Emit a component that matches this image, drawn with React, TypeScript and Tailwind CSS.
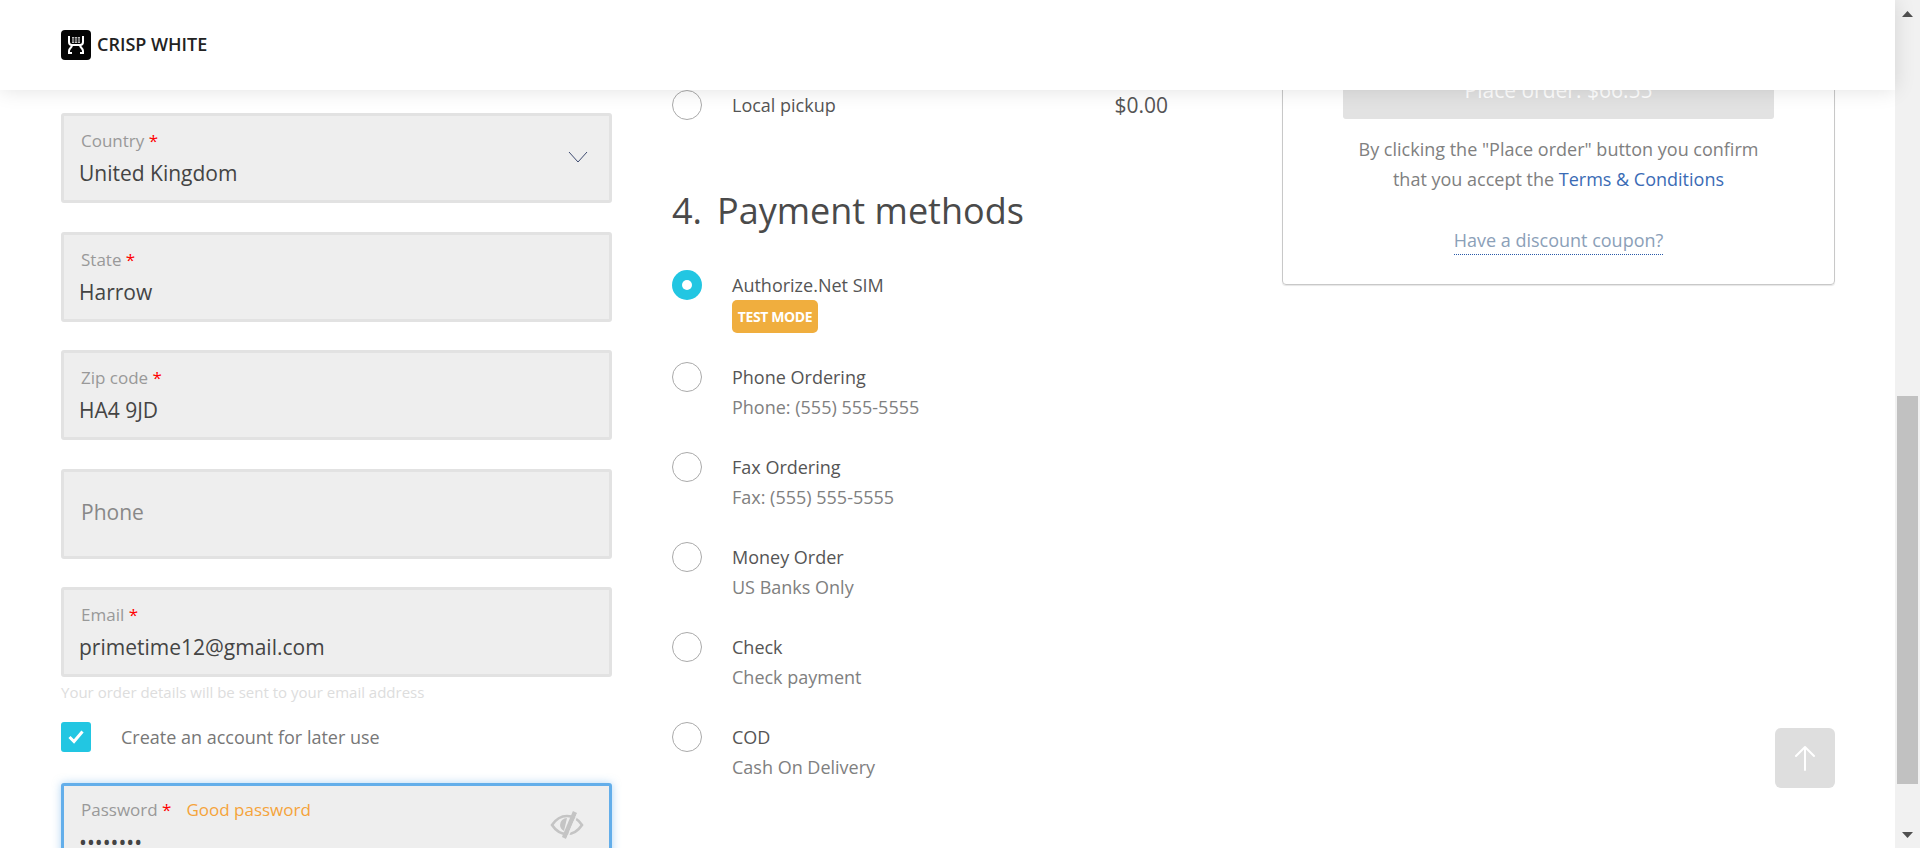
const font = "font-['Open_Sans',sans-serif]";

function Field({ label, value, children }: { label: string; value: string; children?: React.ReactNode }) {
  return (
    <div className="relative h-[90px] shrink-0 rounded-[3px] border-[3px] border-[#e2e2e2] bg-[#eeeeee]">
      <div className="pl-[17px] pt-[13px] text-[17px] leading-[24px] text-[#999999]">
        {label} <span className="text-[#ff0000]">*</span>
      </div>
      <div className="pl-[15px] pt-[5px] text-[21px] leading-[30px] text-[#444444]">{value}</div>
      {children}
    </div>
  );
}

function Radio({ checked }: { checked?: boolean }) {
  if (checked) {
    return (
      <div className="flex h-[30px] w-[30px] shrink-0 items-center justify-center rounded-full bg-[#22c6e2]">
        <div className="h-[10px] w-[10px] rounded-full bg-white" />
      </div>
    );
  }
  return <div className="h-[30px] w-[30px] shrink-0 rounded-full border border-[#aaaaaa] bg-white" />;
}

function PayRow({ title, sub }: { title: string; sub: string }) {
  return (
    <div className="mb-[30px] flex gap-[30px]">
      <Radio />
      <div className="text-[18px] leading-[30px]">
        <div className="text-[#555555]">{title}</div>
        <div className="text-[#808080]">{sub}</div>
      </div>
    </div>
  );
}

function Logo() {
  return (
    <svg width="30" height="30" viewBox="0 0 30 30" className="shrink-0">
      <rect width="30" height="30" rx="4" fill="#050505" />
      <path d="M11 7h8v6h-8z" fill="#bdbdbd" />
      <path d="M11 9h8M11 11h8M13.500 7v6M16.500 7v6" stroke="#050505" strokeWidth="0.7" />
      <g fill="none" stroke="#ffffff" strokeWidth="2">
        <path d="M8 6v6c0 2 1 3 3 3h8c2 0 3-1 3-3V6" />
        <path d="M11 15c0 3-3 3-3 6v2h3M19 15c0 3 3 3 3 6v2h-3" />
      </g>
    </svg>
  );
}

export default function App() {
  return (
    <div className={`${font} relative flex h-[848px] w-[1920px] overflow-hidden bg-white`}>
      <div className="absolute left-0 top-0 z-10 flex h-[90px] w-[1895px] items-center gap-[6px] bg-white pl-[61px] shadow-[0_0_20px_rgba(0,0,0,0.12)]">
        <Logo />
        <span className="mb-[2px] text-[18px] font-semibold text-[#222222]">CRISP WHITE</span>
      </div>

      <main className="flex w-[1895px] shrink-0 pl-[61px]">
        <section className="flex w-[551px] shrink-0 flex-col gap-[28.5px] pt-[113px]">
          <Field label="Country" value="United Kingdom">
            <svg width="20" height="12" viewBox="0 0 20 12" className="absolute left-[504px] top-[35px]">
              <path d="M1 1l9 10 9-10" fill="none" stroke="#3d4a70" strokeWidth="1" />
            </svg>
          </Field>
          <Field label="State" value="Harrow" />
          <Field label="Zip code" value="HA4 9JD" />
          <div className="flex h-[90px] shrink-0 items-center rounded-[3px] border-[3px] border-[#e2e2e2] bg-[#eeeeee] pb-[1px] pl-[17px] text-[21px] text-[#888888]">
            Phone
          </div>
          <div className="shrink-0">
            <Field label="Email" value="primetime12@gmail.com" />
            <div className="pt-[3px] text-[15px] leading-[24px] text-[#dddddd]">
              Your order details will be sent to your email address
            </div>
            <div className="mt-[18px] flex items-center gap-[30px]">
              <div className="flex h-[30px] w-[30px] items-center justify-center rounded-[3px] bg-[#22c6e2]">
                <svg width="16" height="14" viewBox="0 0 16 14">
                  <path d="M1.500 7l4.500 4.500 8.500-10" fill="none" stroke="#ffffff" strokeWidth="3" />
                </svg>
              </div>
              <span className="text-[18px] text-[#777777]">Create an account for later use</span>
            </div>
          </div>
          <div className="relative mt-[2px] h-[90px] shrink-0 rounded-[3px] border-[3px] border-[#63aeea] bg-[#eeeeee] shadow-[0_0_8px_rgba(99,174,234,0.5)]">
            <div className="flex gap-[15px] pl-[17px] pt-[12px] text-[17px] leading-[24px] text-[#999999]">
              <span>
                Password <span className="text-[#ff0000]">*</span>
              </span>
              <span className="text-[#f5a33a]">Good password</span>
            </div>
            <div className="pl-[15px] pt-[5px] text-[21px] leading-[30px] text-[#444444]">••••••••</div>
            <svg width="34" height="30" viewBox="0 0 34 30" className="absolute left-[486px] top-[24px]">
              <path d="M2 15c4-6 9-9 15-9s11 3 15 9c-4 6-9 9-15 9S6 21 2 15z" fill="none" stroke="#c4c4c4" strokeWidth="2.6" />
              <path d="M17 8a7 7 0 0 0-7 7c0 3 2 5 4 6z" fill="#c4c4c4" />
              <path d="M25 2L14 28" stroke="#c4c4c4" strokeWidth="4.5" />
              <path d="M27.500 4L16.500 30" stroke="#eeeeee" strokeWidth="1.5" />
            </svg>
          </div>
        </section>

        <section className="ml-[60px] w-[496px] shrink-0 pt-[90px]">
          <div className="flex gap-[30px]">
            <Radio />
            <div className="flex flex-1 items-center justify-between text-[18px] leading-[30px] text-[#555555]">
              <span>Local pickup</span>
              <span className="text-[21px]">$0.00</span>
            </div>
          </div>
          <h2 className="mt-[69px] flex gap-[15px] text-[36px] leading-[44px] text-[#4a4a4a]">
            <span>4.</span>
            <span>Payment methods</span>
          </h2>
          <div className="mb-[29px] mt-[37px] flex gap-[30px]">
            <Radio checked />
            <div>
              <div className="text-[18px] leading-[30px] text-[#555555]">Authorize.Net SIM</div>
              <div className="flex h-[33px] w-[86px] items-center justify-center rounded-[5px] bg-[#f0ae3e] text-[14px] font-bold tracking-[-0.4px] text-white">
                TEST MODE
              </div>
            </div>
          </div>
          <PayRow title="Phone Ordering" sub="Phone: (555) 555-5555" />
          <PayRow title="Fax Ordering" sub="Fax: (555) 555-5555" />
          <PayRow title="Money Order" sub="US Banks Only" />
          <PayRow title="Check" sub="Check payment" />
          <PayRow title="COD" sub="Cash On Delivery" />
        </section>

        <aside className="ml-[114px] w-[553px] shrink-0 pt-[30px]">
          <div className="flex h-[255px] flex-col items-center rounded-[4px] border border-[#c8c8c8] pt-[28px] shadow-[0_1px_1px_rgba(0,0,0,0.1)]">
            <div className="flex h-[60px] w-[431px] items-center justify-center rounded-[3px] bg-[#e2e2e2] pt-[3px] text-[21px] text-white">
              Place order: $66.55
            </div>
            <p className="mt-[15px] text-center text-[18px] leading-[30px] text-[#808080]">
              By clicking the "Place order" button you confirm
              <br />
              that you accept the <span className="text-[#3a6bb5]">Terms &amp; Conditions</span>
            </p>
            <span className="mt-[33px] border-b border-dotted border-[#2a5aa8] text-[18px] leading-[27px] text-[#8ba0b8]">
              Have a discount coupon?
            </span>
          </div>
        </aside>
      </main>

      <div className="flex w-[25px] shrink-0 flex-col items-center bg-[#f1f1f1]">
        <svg width="11" height="6" viewBox="0 0 11 6" className="mt-[11px]">
          <path d="M0 6h11L5.500 0z" fill="#505050" />
        </svg>
        <div className="mt-[379px] h-[388px] w-[21px] bg-[#c1c1c1]" />
        <svg width="11" height="6" viewBox="0 0 11 6" className="mt-[48px]">
          <path d="M0 0h11L5.500 6z" fill="#505050" />
        </svg>
      </div>

      <div className="absolute left-[1775px] top-[728px] flex h-[60px] w-[60px] items-center justify-center rounded-[6px] bg-[#dedede]">
        <svg width="22" height="28" viewBox="0 0 22 28">
          <path d="M11 26V3M2 12l9-9 9 9" fill="none" stroke="#ffffff" strokeWidth="2" strokeLinecap="round" strokeLinejoin="round" />
        </svg>
      </div>
    </div>
  );
}
